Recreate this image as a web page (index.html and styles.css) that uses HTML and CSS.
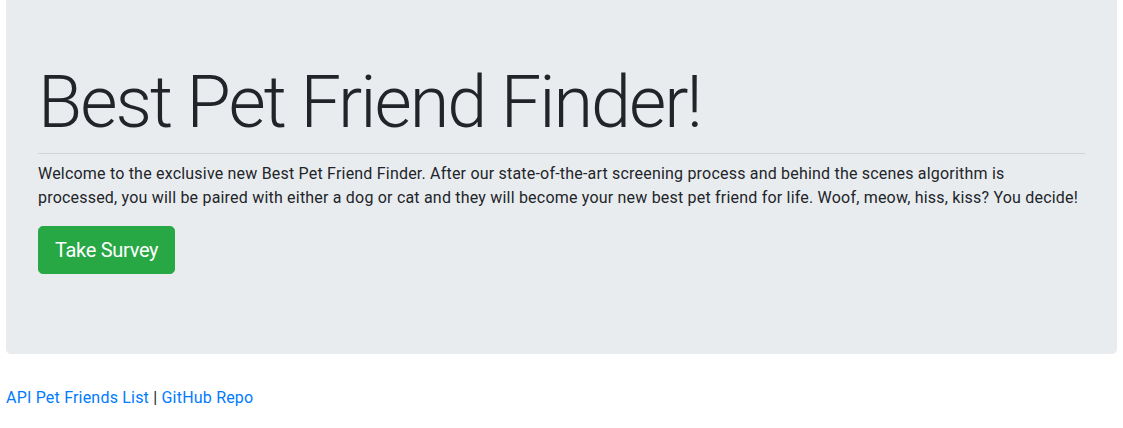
FILE: index.html
```html
<!DOCTYPE html>
<html lang="en">
<head>
<meta charset="utf-8">
<title>Best Pet Friend Finder</title>
<link rel="stylesheet" href="styles.css">
</head>
<body>
<main class="page">
  <section class="jumbotron">
    <h1 class="display">Best Pet Friend Finder!</h1>
    <hr class="divider">
    <p class="intro">Welcome to the exclusive new Best Pet Friend Finder. After our state-of-the-art screening process and behind the scenes algorithm is processed, you will be paired with either a dog or cat and they will become your new best pet friend for life. Woof, meow, hiss, kiss? You decide!</p>
    <div class="actions"><a class="btn-survey" href="#">Take Survey</a></div>
  </section>
  <footer class="links">
    <a href="#">API Pet Friends List</a> | <a href="#">GitHub Repo</a>
  </footer>
</main>
</body>
</html>
```

FILE: styles.css
```css
html, body {
  margin: 0;
  padding: 0;
  background: #fff;
}
body {
  font-family: Roboto, "Liberation Sans", sans-serif;
  font-size: 16px;
  line-height: 1.5;
  color: #212529;
  letter-spacing: 0.2px;
}
.page {
  padding: 0 6px;
}
.jumbotron {
  background: #e9ecef;
  border-radius: 0 0 4.8px 4.8px;
  padding: 60px 32px 64px;
  margin-bottom: 32px;
}
.display {
  margin: 0 0 7px;
  font-size: 72px;
  font-weight: 300;
  line-height: 86px;
  letter-spacing: -2px;
}
.divider {
  margin: 0 0 8px;
  border: 0;
  border-top: 1px solid rgba(0, 0, 0, 0.1);
  height: 0;
}
.intro {
  margin: 0 0 16px;
}
.actions {
  display: flex;
  margin-bottom: 16px;
}
.btn-survey {
  display: inline-block;
  background: #28a745;
  color: #fff;
  text-decoration: none;
  font-size: 20px;
  line-height: 30px;
  letter-spacing: -0.3px;
  padding: 8px 16px;
  border: 1px solid #28a745;
  border-radius: 4.8px;
}
.links {
  color: #212529;
}
.links a {
  color: #007bff;
  text-decoration: none;
}
```
